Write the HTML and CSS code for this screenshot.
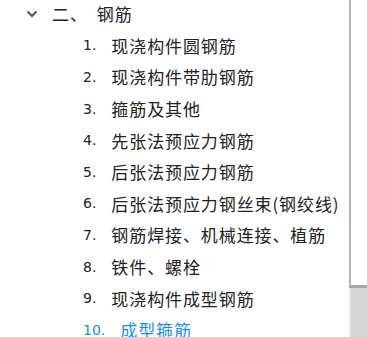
FILE: index.html
```html
<!DOCTYPE html>
<html>
<head>
    <meta charset="UTF-8">
    <title>钢筋</title>
    <link rel="stylesheet" href="styles.css">
</head>
<body>
    <div class="panel">
        <div class="tree">
            <div class="node">
                <svg class="arrow" width="12" height="8" viewBox="0 0 12 8"><path d="M1.5 1.5 L6 6 L10.5 1.5" fill="none" stroke="#555" stroke-width="2"/></svg>
                <span class="cn">二、</span>
                <span class="title">钢筋</span>
            </div>
            <div class="item"><span class="no">1.</span>现浇构件圆钢筋</div>
            <div class="item"><span class="no">2.</span>现浇构件带肋钢筋</div>
            <div class="item"><span class="no">3.</span>箍筋及其他</div>
            <div class="item"><span class="no">4.</span>先张法预应力钢筋</div>
            <div class="item"><span class="no">5.</span>后张法预应力钢筋</div>
            <div class="item"><span class="no">6.</span>后张法预应力钢丝束(钢绞线)</div>
            <div class="item"><span class="no">7.</span>钢筋焊接、机械连接、植筋</div>
            <div class="item"><span class="no">8.</span>铁件、螺栓</div>
            <div class="item"><span class="no">9.</span>现浇构件成型钢筋</div>
            <div class="item active"><span class="no">10.</span>成型箍筋</div>
        </div>
        <div class="scroll">
            <div class="thumb"></div>
            <div class="track"></div>
        </div>
    </div>
</body>
</html>
```

FILE: styles.css
```css
body {
    margin: 0;
    background: #fff;
    font-family: "Noto Sans CJK SC", "Noto Sans", sans-serif;
    color: #222;
    overflow: hidden;
}

.panel {
    display: flex;
    height: 337px;
}

.tree {
    flex: 1;
    margin-top: -2px;
}

.node, .item {
    height: 31.6px;
    display: flex;
    align-items: center;
    font-size: 17px;
    letter-spacing: 0.9px;
    white-space: nowrap;
}

.node {
    padding-left: 26px;
}

.arrow {
    margin-right: 14px;
}

.cn {
    margin-right: 9px;
}

.item {
    padding-left: 83px;
}

.no {
    font-family: "DejaVu Sans", sans-serif;
    font-size: 14px;
    letter-spacing: 0;
    margin-right: 15px;
}

.item.active {
    color: #1a8cf0;
}

.scroll {
    width: 18px;
    display: flex;
    flex-direction: column;
}

.thumb {
    height: 285px;
    border-left: 2px solid #b4b4b4;
    border-bottom: 3px solid #a9a9a9;
    background: #fff;
}

.track {
    flex: 1;
    background: #d5d5d5;
    border-left: 2px solid #e8e8e8;
}
```
